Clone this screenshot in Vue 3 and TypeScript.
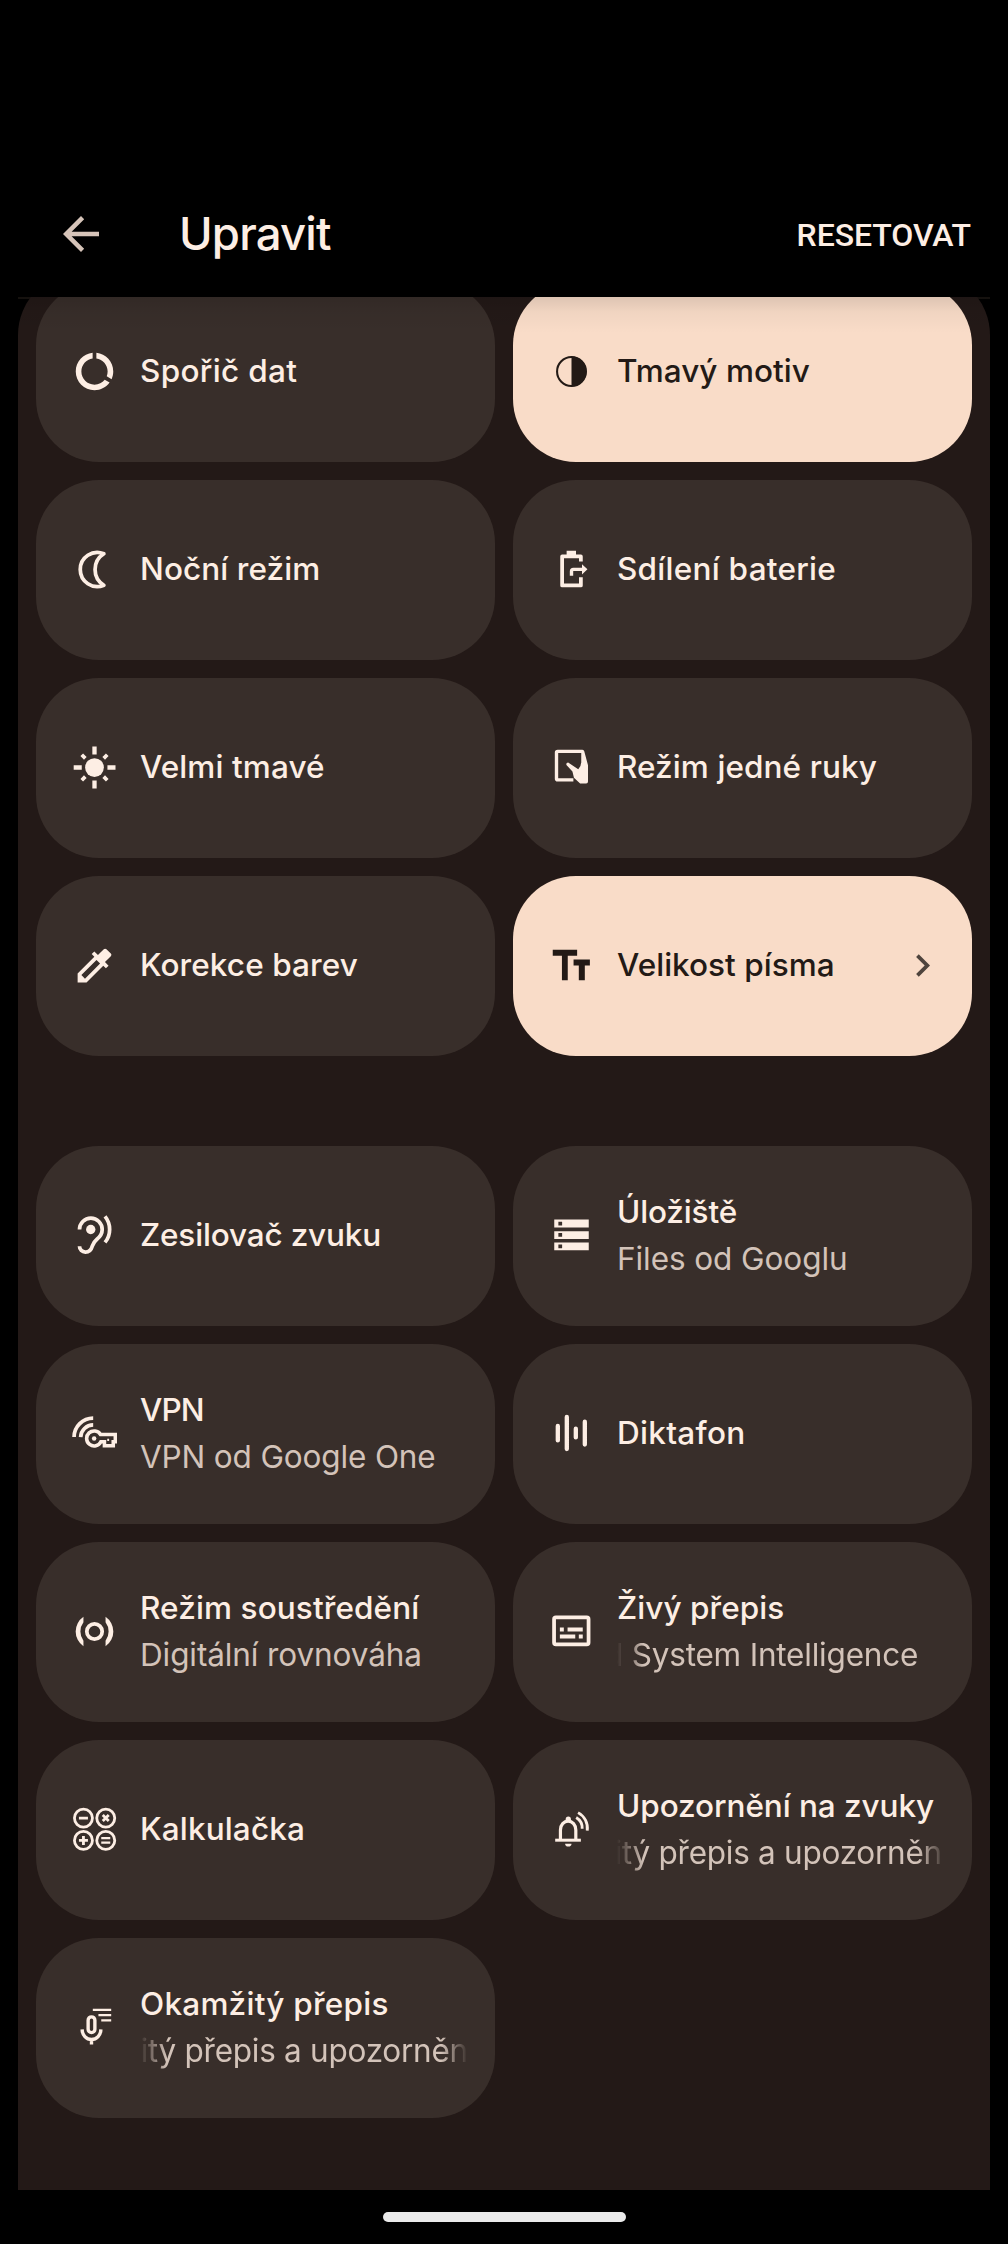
<script setup lang="ts">
interface Tile {
  icon: string
  label: string
  width: number
  sub?: string
  subWidth?: number
  shift?: number
  fade?: boolean
  active?: boolean
  chevron?: boolean
}

const FAMILY = 'Inter, Roboto, sans-serif'
const ctx = document.createElement('canvas').getContext('2d')!

// Letter spacing that makes a label occupy the given ink width
function spacing(text: string, width: number, weight: number, size: number, family = FAMILY): string {
  ctx.font = `${weight} ${size}px ${family}`
  const m = ctx.measureText(text)
  const ink = m.actualBoundingBoxLeft + m.actualBoundingBoxRight
  return `${((width - ink) / (text.length - 1)).toFixed(3)}px`
}

const S = 'class="s"'
const icons: Record<string, string> = {
  data: '<path d="M13,2.05v3.03c3.39,0.49 6,3.39 6,6.92c0,0.9 -0.18,1.75 -0.48,2.54l2.6,1.53C21.68,14.83 22,13.45 22,12C22,6.82 18.05,2.55 13,2.05zM12,19c-3.87,0 -7,-3.13 -7,-7c0,-3.53 2.61,-6.43 6,-6.92V2.05C5.94,2.55 2,6.81 2,12c0,5.52 4.47,10 9.99,10c3.31,0 6.24,-1.61 8.06,-4.09l-2.6,-1.53C16.17,17.98 14.21,19 12,19z"/>',
  dark: `<circle ${S} cx="12" cy="12" r="7.7" stroke-width="1.1"/><path d="M12 4a8 8 0 0 1 0 16z"/>`,
  night: `<path ${S} stroke-width="2" stroke-linejoin="round" d="M17 3.6A9.1 9.1 0 1 0 17 20.4A9.86 9.86 0 0 1 17 3.6z"/>`,
  battery: `<path ${S} stroke-width="2" stroke-linejoin="round" d="M17 7.7V5H7v15.5h10v-4.4"/><path d="M9.4 2h5v3h-5zM17.6 9.2l2.9 2.7-2.9 2.7z"/><path ${S} stroke-width="1.8" d="M12 15.3v-2.4q0-1 1-1h5"/>`,
  sun: `<circle cx="12" cy="12" r="5"/><path ${S} stroke-width="2.3" d="M12 .8v4.3M12 18.9v4.3M.9 12h4.3M18.9 12h4.3"/><path ${S} stroke-width="2" d="M5.2 5.2l1.9 1.9M16.9 16.9l1.9 1.9M5.2 18.8l1.9-1.9M16.9 7.1l1.9-1.9"/>`,
  hand: `<path ${S} stroke-width="1.8" d="M13 18.6H4.6q-.6 0-.6-.6V4q0-.6.6-.6H18"/><path d="M17.2 2.6H18q.6 0 .8.7L20.8 10.8V19.5q0 1-1 1h-3.2l-3.3-3-.8-3.4L9.3 10.6q-.3-1.2.9-1.3l5.4 3.6q1.6-1.6 1.6-3.9z"/>`,
  dropper: '<path fill-rule="evenodd" d="M17.67,3c-0.26,0 -0.51,0.1 -0.71,0.29l-3.12,3.12l-1.93,-1.91l-1.41,1.41l1.42,1.42L3,16.25V21h4.75l8.92,-8.92l1.42,1.42l1.41,-1.41l-1.92,-1.92l3.12,-3.12c0.4,-0.4 0.4,-1.03 0.01,-1.42l-2.34,-2.34C18.18,3.1 17.93,3 17.67,3zM6.92,19L5,17.08l8.06,-8.06l1.92,1.92L6.92,19z"/>',
  font: '<path d="M2 3.6h13v3.2h-5v13H6.9v-13H2zM13.1 8.8h8.7V12h-2.7v7.8h-3.2V12h-2.8z"/>',
  ear: `<circle cx="10" cy="8.8" r="2.5"/><path ${S} stroke-width="2" d="M4 8.8a6.05 6.05 0 0 1 12.1 0c0 2.5-1.3 4-2.8 5.2-1.6 1.3-2 2.2-2.5 3.7-.5 1.8-1.6 3.1-3.6 3.1A3.1 3.1 0 0 1 4 17.7M17.6 1.8a11 11 0 0 1 0 13.9"/>`,
  storage: '<path fill-rule="evenodd" d="M2.8 3.5h18.4v4.2H2.8zM5 4.6v2h2v-2zM2.8 9.7h18.4v4.1H2.8zM5 10.7v2h2v-2zM2.8 15.7h18.4v4.1H2.8zM5 16.8v2h2v-2z"/>',
  vpn: `<path ${S} stroke-width="2" d="M1.1 13.9A10.2 10.2 0 0 1 11.3 3.8M4.6 13.9a6.8 6.8 0 0 1 6.7-6.5"/><path ${S} stroke-width="1.9" d="M15.2 12.5H23.1v3.9H22v2.1h-4.7v-2.1h-1.9A4 4 0 1 1 15.2 12.5z"/><circle cx="11.8" cy="14.6" r="1.2"/><path ${S} stroke-width="1" d="M19.3 14.8v1.2"/>`,
  bars: `<path ${S} stroke-width="2.3" stroke-linecap="round" d="M4.7 8v7.7M9.5 3.2v17.1M14.3 9.4v4.7M19.1 5.7v12.2"/>`,
  focus: `<circle ${S} cx="12" cy="12" r="4.1" stroke-width="2"/><path d="M6.1 4.1v3a8.2 8.2 0 0 0 0 9.8v3a9.6 9.6 0 0 1 0-15.8zM17.9 4.1v3a8.2 8.2 0 0 1 0 9.8v3a9.6 9.6 0 0 0 0-15.8z"/>`,
  caption: `<rect ${S} x="2.7" y="4.5" width="18.4" height="14.4" rx="1" stroke-width="2"/><path d="M5.8 9.9h2.1V12H5.8zM9.9 9.9H18V12H9.9zM5.8 13.6H14v2.1H5.8zM15.9 13.6H18v2.1h-2.1z"/>`,
  calc: `<g ${S} stroke-width="1.5"><circle cx="6.1" cy="5.9" r="4.8"/><circle cx="18" cy="5.9" r="4.8"/><circle cx="6.1" cy="17.8" r="4.8"/><circle cx="18" cy="17.8" r="4.8"/><path d="M3.7 5.9h4.8M16.4 4.3l3.2 3.2M19.6 4.3l-3.2 3.2M3.7 17.8h4.8M6.1 15.4v4.8"/><path stroke-width="1.3" d="M15.6 16.6h4.8M15.6 19h4.8"/></g>`,
  bell: `<path ${S} stroke-width="1.7" d="M6.1 17.6v-5.4a4.1 4.7 0 0 1 8.2 0v5.4"/><path ${S} stroke-width="1.6" d="M3.3 17.7H17"/><path d="M8.6 19.6h3.4a1.7 1.5 0 0 1-3.4 0z"/><circle cx="10.3" cy="6.5" r="1.4"/><path ${S} stroke-width="1.5" d="M15.5 3a9.4 9.4 0 0 1 4.9 9.6M14.5 5.6a6.6 6.6 0 0 1 3.2 6"/>`,
  mic: `<rect ${S} x="8.6" y="6.3" width="3.6" height="8.4" rx="1.8" stroke-width="1.8"/><path ${S} stroke-width="1.8" d="M5.4 13a5 5.4 0 0 0 10 0M10.4 18.3V21"/><path ${S} stroke-width="1.2" d="M11.1 2.6h9.8M14.1 5.4h6.8M15.6 8.2h5.3"/>`,
}

const current: Tile[] = [
  { icon: 'data', label: 'Spořič dat', width: 156.3 },
  { icon: 'dark', label: 'Tmavý motiv', width: 191.7, active: true },
  { icon: 'night', label: 'Noční režim', width: 176.3 },
  { icon: 'battery', label: 'Sdílení baterie', width: 217.3 },
  { icon: 'sun', label: 'Velmi tmavé', width: 184 },
  { icon: 'hand', label: 'Režim jedné ruky', width: 257.7 },
  { icon: 'dropper', label: 'Korekce barev', width: 215.7 },
  { icon: 'font', label: 'Velikost písma', width: 215.7, active: true, chevron: true },
]

const fromApps: Tile[] = [
  { icon: 'ear', label: 'Zesilovač zvuku', width: 238.3 },
  { icon: 'storage', label: 'Úložiště', width: 117.7, sub: 'Files od Googlu', subWidth: 227 },
  { icon: 'vpn', label: 'VPN', width: 62.7, sub: 'VPN od Google One', subWidth: 294.3 },
  { icon: 'bars', label: 'Diktafon', width: 124.3 },
  { icon: 'focus', label: 'Režim soustředění', width: 278.3, sub: 'Digitální rovnováha', subWidth: 278.3 },
  { icon: 'caption', label: 'Živý přepis', width: 165.3, sub: 'd System Intelligence', subWidth: 312, shift: -13, fade: true },
  { icon: 'calc', label: 'Kalkulačka', width: 161 },
  { icon: 'bell', label: 'Upozornění na zvuky', width: 315, sub: 'itý přepis a upozorněn', subWidth: 325, shift: -2.5, fade: true },
  { icon: 'mic', label: 'Okamžitý přepis', width: 246.5, sub: 'itý přepis a upozorněn', subWidth: 325, shift: 0.5, fade: true },
]

const groups = [current, fromApps]
</script>

<template>
  <div class="screen">
    <header class="toolbar">
      <svg class="back" viewBox="0 0 24 24"><path d="M20,11H7.83l5.59,-5.59L12,4l-8,8l8,8l1.41,-1.41L7.83,13H20V11z" /></svg>
      <h1 class="title" :style="{ letterSpacing: spacing('Upravit', 149, 500, 45.5) }">Upravit</h1>
      <button class="reset" :style="{ letterSpacing: spacing('RESETOVAT', 172, 500, 32, 'Roboto') }">RESETOVAT</button>
    </header>
    <main class="viewport">
      <div class="panel">
        <section v-for="(group, g) in groups" :key="g" class="grid">
          <div v-for="tile in group" :key="tile.label" class="tile" :class="{ active: tile.active }">
            <svg class="icon" viewBox="0 0 24 24" v-html="icons[tile.icon]"></svg>
            <div class="text">
              <div class="label" :style="{ letterSpacing: spacing(tile.label, tile.width, 500, 31.5) }">{{ tile.label }}</div>
              <div v-if="tile.sub" class="sub" :class="{ fade: tile.fade }">
                <span
                  :style="{
                    letterSpacing: spacing(tile.sub, tile.subWidth!, 400, 31.5),
                    marginLeft: (tile.shift ?? 0) + 'px',
                  }"
                >{{ tile.sub }}</span>
              </div>
            </div>
            <svg v-if="tile.chevron" class="icon chevron" viewBox="0 0 24 24"><path d="M10,6L8.59,7.41 13.17,12l-4.58,4.59L10,18l6,-6z" /></svg>
          </div>
        </section>
      </div>
    </main>
    <footer class="nav"><div class="handle"></div></footer>
  </div>
</template>

<style>
body {
  background: #000;
}
</style>

<style scoped>
.screen {
  width: 1008px;
  height: 2244px;
  background: #000;
  font-family: Inter, Roboto, sans-serif;
  color: #fdeee4;
  display: flex;
  flex-direction: column;
  overflow: hidden;
}
.toolbar {
  height: 297px;
  flex: none;
  box-sizing: border-box;
  padding: 171px 37px 0 54px;
  display: flex;
  align-items: center;
}
.back {
  width: 54px;
  height: 54px;
  fill: #d6c4b9;
}
.title {
  margin: 0 0 1px 71px;
  font-size: 45.5px;
  line-height: 60px;
  font-weight: 500;
  flex: 1;
}
.reset {
  background: none;
  border: 0;
  padding: 2px 0 0;
  color: inherit;
  font: 500 32px/40px Roboto, sans-serif;
}
.viewport {
  position: relative;
  height: 1893px;
  flex: none;
  margin: 0 18px;
  overflow: hidden;
}
.viewport::after {
  content: "";
  position: absolute;
  left: 0;
  right: 0;
  top: 0;
  height: 36px;
  background: linear-gradient(rgba(0, 0, 0, 0.11), rgba(0, 0, 0, 0.035) 15px, rgba(0, 0, 0, 0));
}
.viewport::before {
  content: "";
  position: absolute;
  left: 0;
  right: 0;
  top: 0;
  height: 2px;
  background: #171310;
}
.panel {
  position: relative;
  margin-top: -25px;
  height: 1918px;
  box-sizing: border-box;
  padding: 10px 18px 0;
  border-radius: 63px 63px 0 0;
  background: #231917;
  display: flex;
  flex-direction: column;
  gap: 90px;
}
.grid {
  display: grid;
  grid-template-columns: 1fr 1fr;
  grid-auto-rows: 180px;
  gap: 18px;
}
.tile {
  display: flex;
  align-items: center;
  min-width: 0;
  box-sizing: border-box;
  padding: 0 27px 0 36px;
  border-radius: 63px;
  background: #382e2a;
}
.tile.active {
  background: #f9dcc8;
  color: #231a16;
}
.icon {
  width: 45px;
  height: 45px;
  flex: none;
  margin-bottom: 1px;
  fill: currentColor;
}
.icon :deep(.s) {
  fill: none;
  stroke: currentColor;
}
.chevron {
  color: #4f443d;
}
.text {
  flex: 1;
  min-width: 0;
  margin-left: 23px;
  padding-bottom: 3px;
  font-size: 31.5px;
  line-height: 47px;
  white-space: nowrap;
}
.label {
  font-weight: 500;
}
.sub {
  color: #d3c3b9;
  overflow: hidden;
}
.fade {
  mask-image: linear-gradient(90deg, transparent, #000 27px, #000 calc(100% - 27px), transparent);
}
.nav {
  flex: 1;
  display: flex;
  justify-content: center;
  align-items: center;
}
.handle {
  width: 243px;
  height: 10px;
  border-radius: 5px;
  background: #ebebeb;
}
</style>
